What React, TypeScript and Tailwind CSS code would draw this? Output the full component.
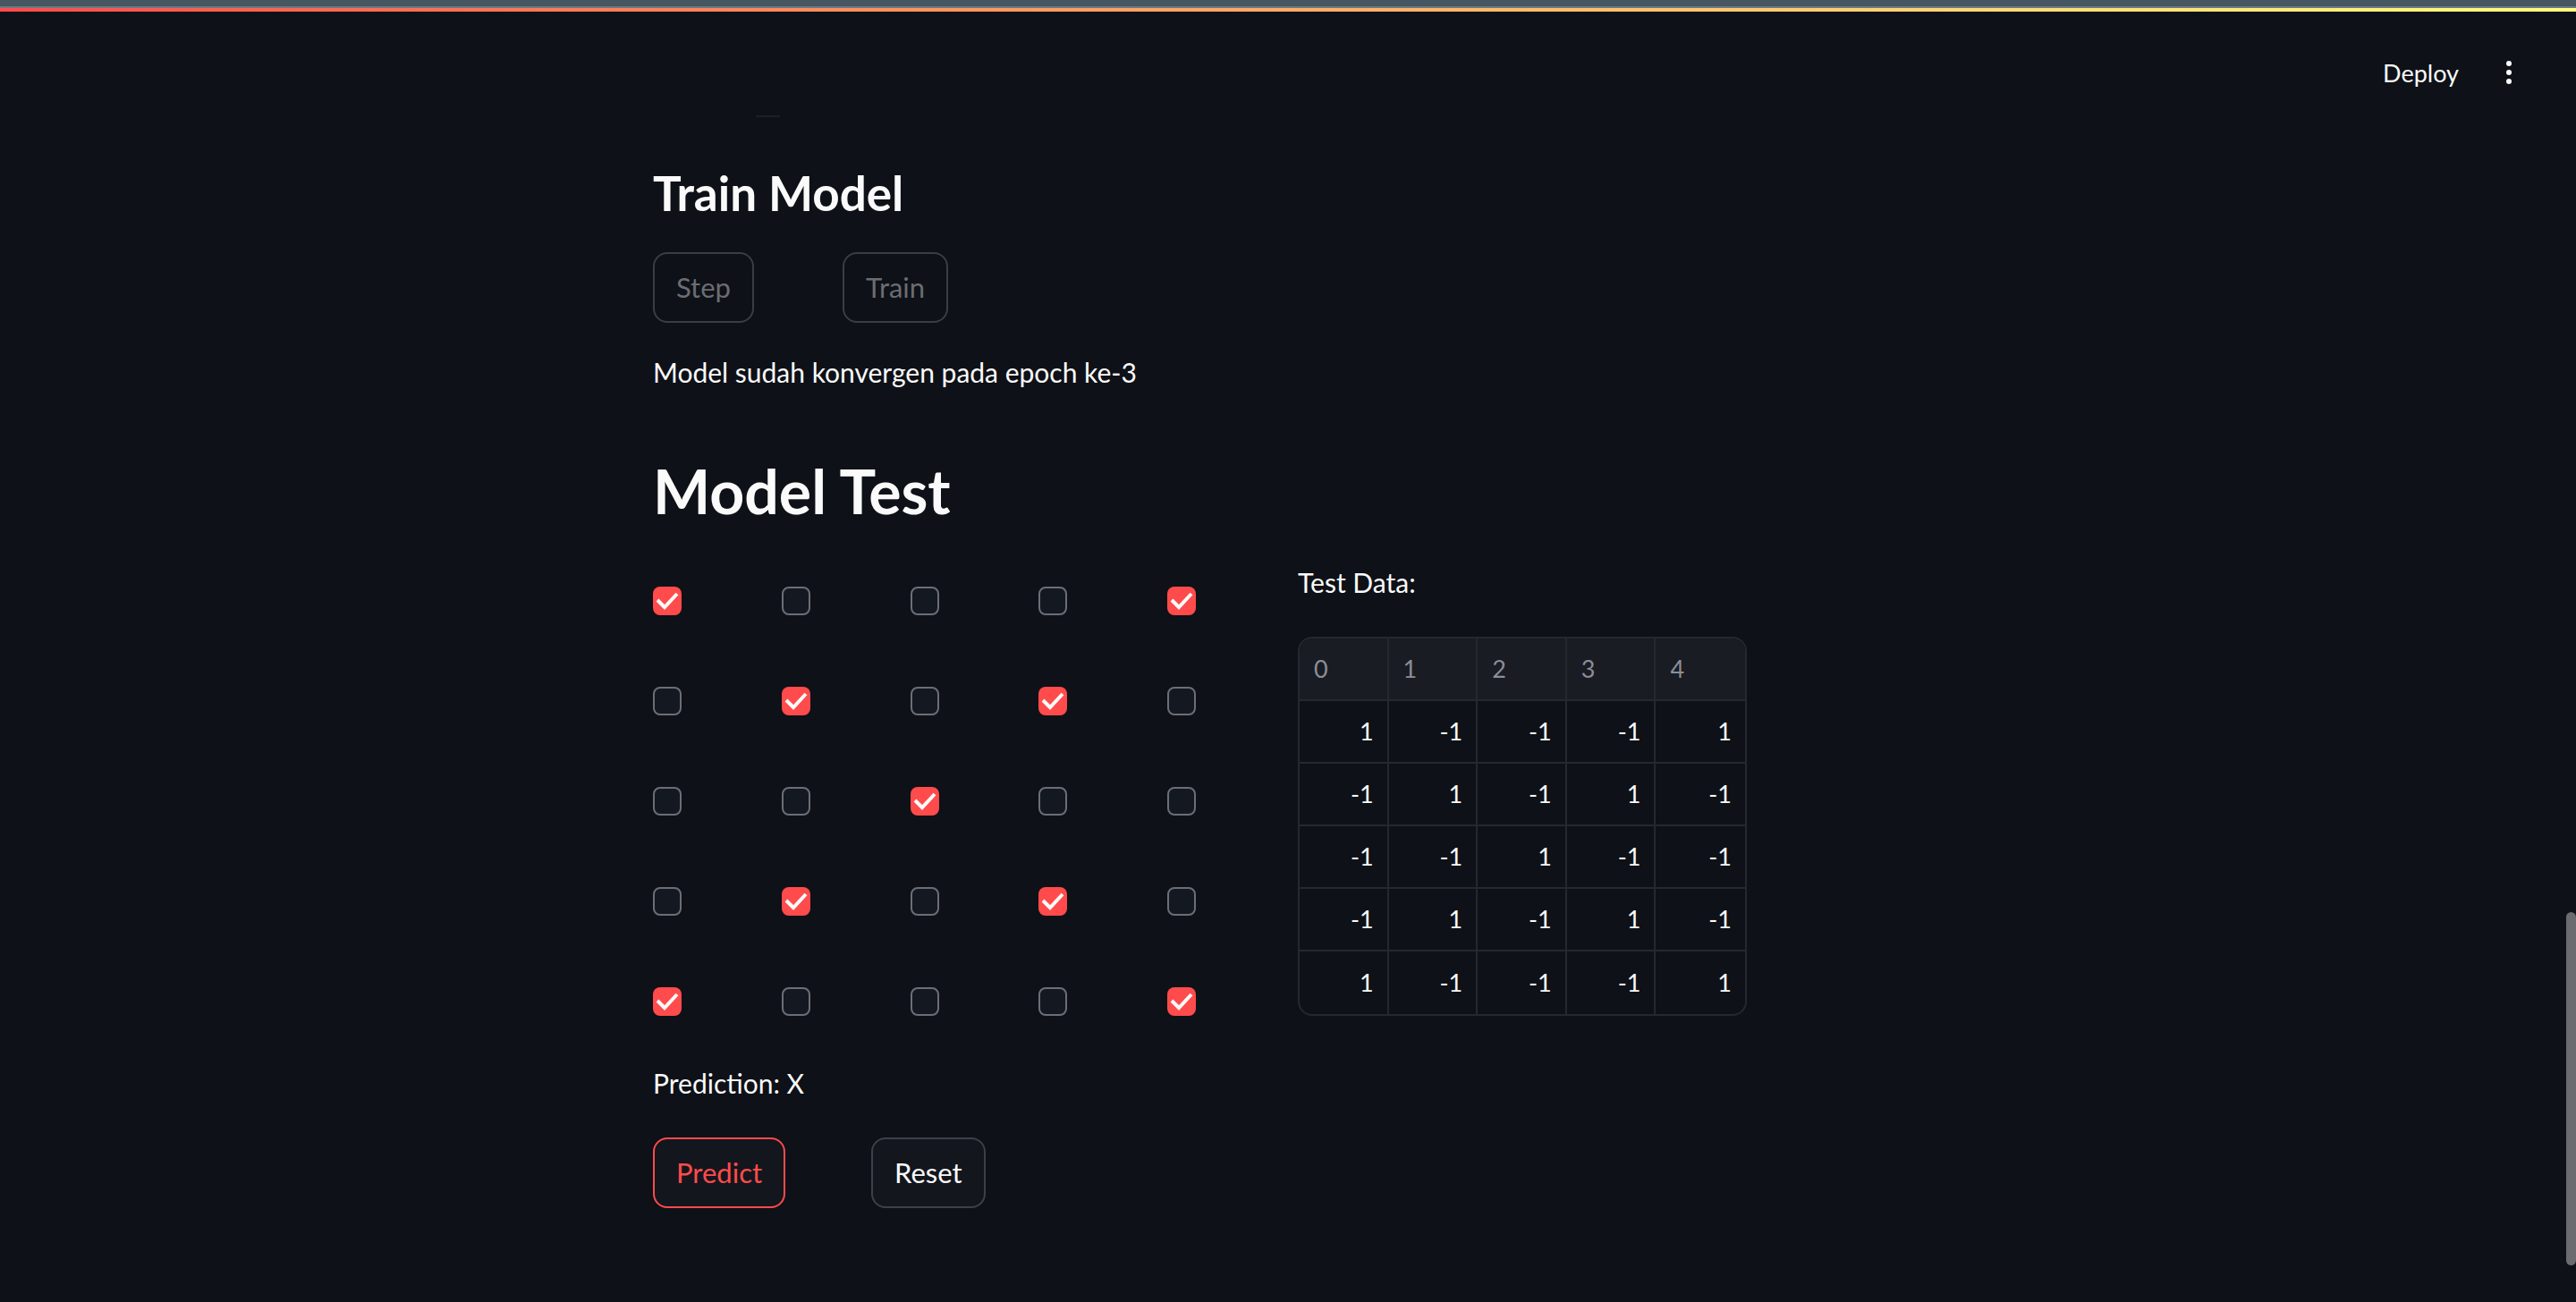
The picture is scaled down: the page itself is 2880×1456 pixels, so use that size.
import React from "react";

const grid: number[][] = [
  [1, 0, 0, 0, 1],
  [0, 1, 0, 1, 0],
  [0, 0, 1, 0, 0],
  [0, 1, 0, 1, 0],
  [1, 0, 0, 0, 1],
];

const Checkbox: React.FC<{ checked: boolean }> = ({ checked }) =>
  checked ? (
    <div className="flex h-8 w-8 items-center justify-center rounded-[8px] bg-[#ff4b4b]">
      <svg width="32" height="32" viewBox="0 0 32 32" fill="none">
        <polyline points="5,15 13,23 27,8" stroke="#fafafa" strokeWidth="4" strokeLinejoin="miter" />
      </svg>
    </div>
  ) : (
    <div className="h-8 w-8 rounded-[8px] border-2 border-[#6b6e76] bg-[#141820]" />
  );

const App: React.FC = () => {
  const table = grid.map((row) => row.map((v) => (v ? 1 : -1)));

  return (
    <div className="relative h-[1456px] w-full overflow-hidden bg-[#0e1117] font-['Lato','Noto_Sans',sans-serif] text-[#fafafa]">
      {/* top decoration */}
      <div className="h-[7px] bg-[#465761]" />
      <div className="h-[2px] bg-[#6b7a82]" />
      <div className="h-[4px] bg-gradient-to-r from-[#ff4b4b] to-[#fffd80]" />

      {/* header toolbar */}
      <div className="absolute right-[72px] top-[56px] flex h-[50px] items-center gap-[53px]">
        <span className="text-[27px] leading-none">Deploy</span>
        <div className="flex flex-col gap-[4px]">
          <span className="h-[6px] w-[6px] rounded-full bg-[#fafafa]" />
          <span className="h-[6px] w-[6px] rounded-full bg-[#fafafa]" />
          <span className="h-[6px] w-[6px] rounded-full bg-[#fafafa]" />
        </div>
      </div>

      <main className="ml-[730px] w-[1408px]">
        <div className="ml-[115px] mt-[116px] h-[2px] w-[27px] rounded-full bg-[#1d2029]" />

        <h3 className="mt-[51px] h-[67px] text-[53px] font-bold leading-[67px]">Train Model</h3>

        <div className="mt-[33px] grid grid-cols-[212px_auto]">
          <div>
            <button className="h-[79px] rounded-[16px] border-2 border-[#3b3d45] px-6 text-[31px] text-[#6b6d73]">
              Step
            </button>
          </div>
          <div>
            <button className="h-[79px] rounded-[16px] border-2 border-[#3b3d45] px-6 text-[31px] text-[#6b6d73]">
              Train
            </button>
          </div>
        </div>

        <p className="mt-[30px] h-[51px] text-[30px] leading-[51px]">Model sudah konvergen pada epoch ke-3</p>

        <h2 className="mt-[64px] h-[86px] text-[68px] font-bold leading-[86px]">Model Test</h2>

        <div className="mt-[24px] grid grid-cols-2 gap-[34px]">
          <div>
            <div className="grid grid-cols-5 gap-x-8">
              {grid.flatMap((row, r) =>
                row.map((v, c) => (
                  <div key={`${r}-${c}`} className="flex h-[112px] items-center">
                    <Checkbox checked={!!v} />
                  </div>
                ))
              )}
            </div>

            <p className="mt-[10px] h-[51px] text-[30px] leading-[51px]">Prediction: X</p>

            <div className="mt-[35px] grid grid-cols-[244px_auto]">
              <div>
                <button className="h-[79px] rounded-[16px] border-2 border-[#ff4b4b] bg-[#13161d] px-6 text-[31px] text-[#ff4b4b]">
                  Predict
                </button>
              </div>
              <div>
                <button className="h-[79px] rounded-[16px] border-2 border-[#3e4049] bg-[#13161d] px-6 text-[31px] text-[#fafafa]">
                  Reset
                </button>
              </div>
            </div>
          </div>

          <div className="pt-[10px]">
            <p className="h-[51px] text-[30px] leading-[51px]">Test Data:</p>
            <div className="mt-[35px] w-[502px] overflow-hidden rounded-[16px] border-2 border-[#262830]">
              <div className="grid grid-cols-5 bg-[#1a1c24]">
                {[0, 1, 2, 3, 4].map((h) => (
                  <div
                    key={h}
                    className="flex h-[70px] items-center border-b-2 border-r-2 border-[#262830] pl-4 text-[27px] text-[#8b8e96] last:border-r-0"
                  >
                    {h}
                  </div>
                ))}
              </div>
              {table.map((row, r) => (
                <div key={r} className="grid grid-cols-5">
                  {row.map((v, c) => (
                    <div
                      key={c}
                      className={`flex h-[70px] items-center justify-end border-r-2 border-[#262830] pr-[15px] text-[27px] last:border-r-0 ${
                        r < 4 ? "border-b-2" : ""
                      }`}
                    >
                      {v}
                    </div>
                  ))}
                </div>
              ))}
            </div>
          </div>
        </div>
      </main>

      {/* scrollbar thumb */}
      <div className="absolute right-0 top-[1020px] h-[395px] w-[11px] rounded-full bg-[#6b6c70]" />
    </div>
  );
};

export default App;
